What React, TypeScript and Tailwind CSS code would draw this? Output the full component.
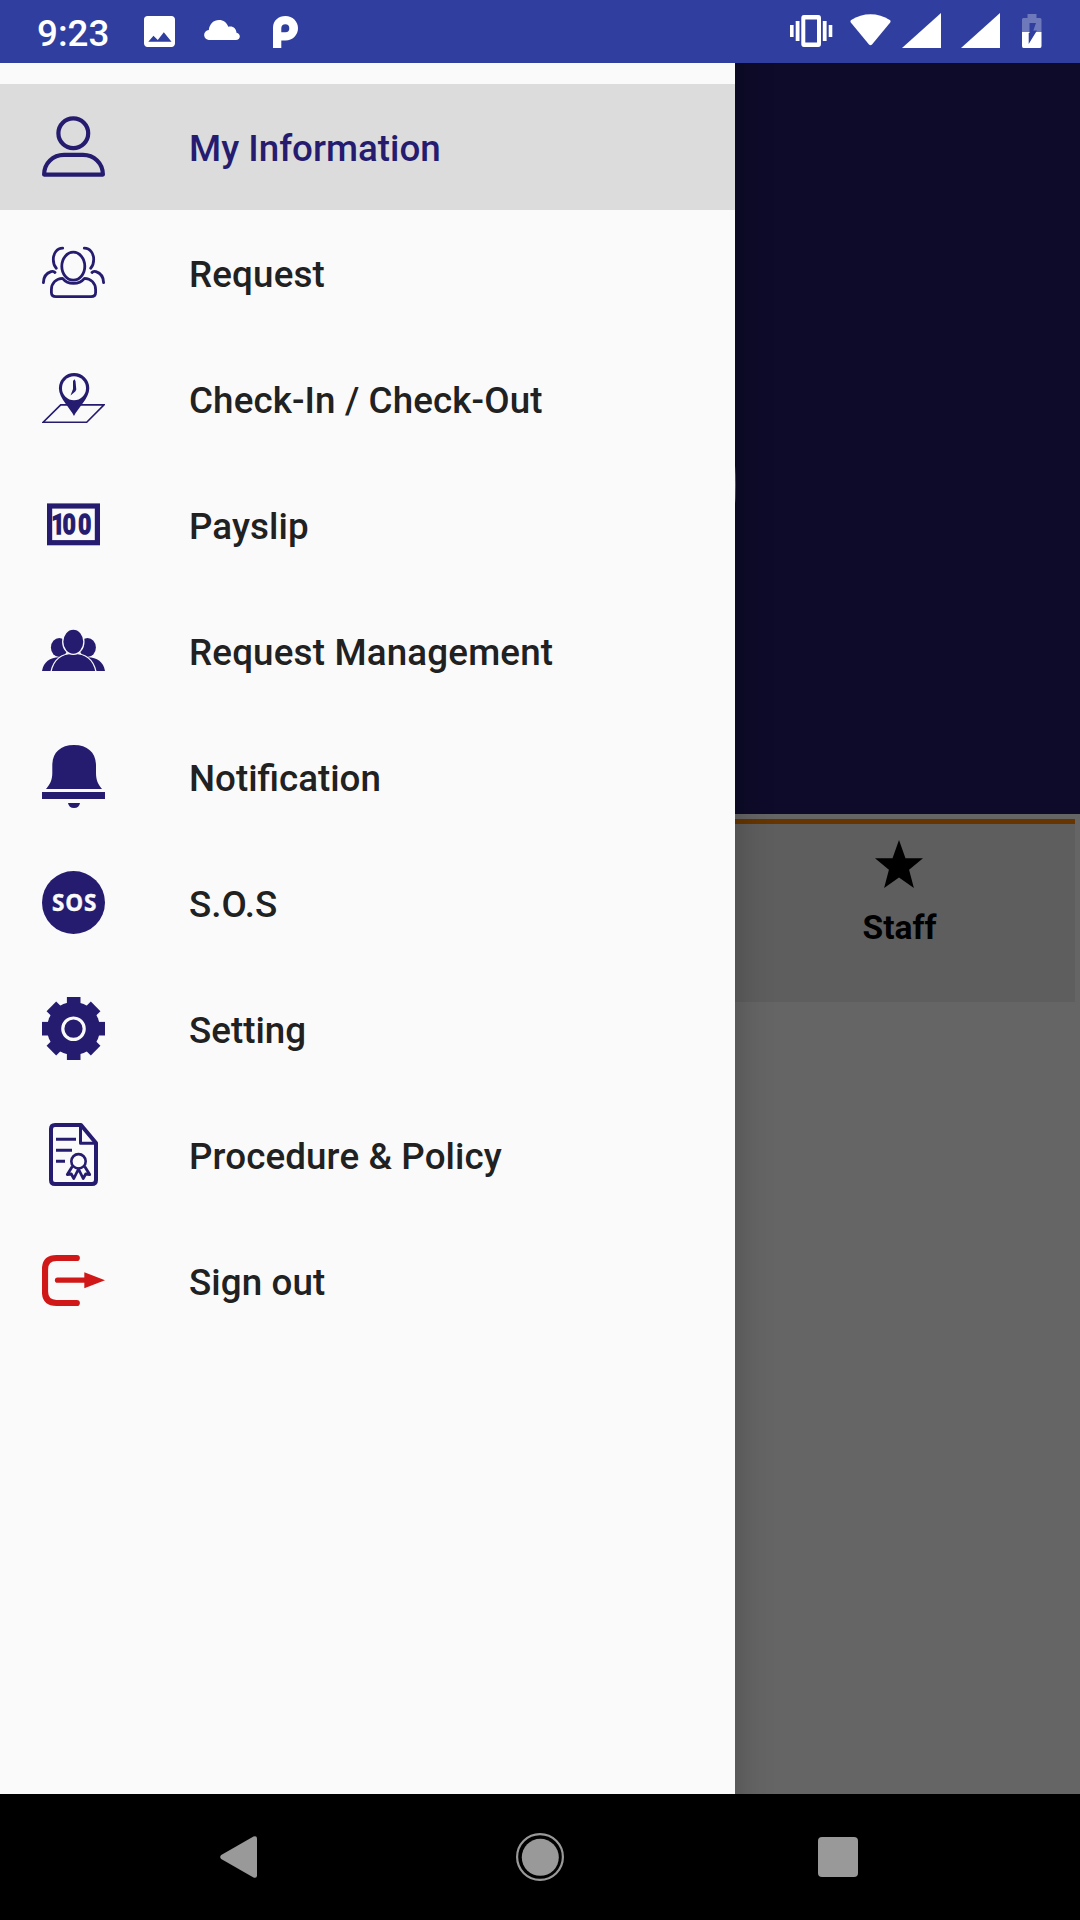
import type { ReactNode } from "react";

const NAVY = "#251c70";

function Icon({ children }: { children: ReactNode }) {
  return (
    <svg className="mt-[31px] block h-[63px] w-[63px] shrink-0" viewBox="0 0 63 63" fill="none">
      {children}
    </svg>
  );
}

const UserIcon = () => (
  <Icon>
    <g stroke={NAVY} strokeWidth="4.200" strokeLinejoin="round">
      <circle cx="31.300" cy="18.300" r="14.900" />
      <path d="M2.100 59.600C2.100 48 11 39.900 22 39.900H41C52 39.900 60.900 48 60.900 59.600Z" />
    </g>
  </Icon>
);

const GroupIcon = () => (
  <Icon>
    <g stroke={NAVY} strokeWidth="2.800" strokeLinecap="round" strokeLinejoin="round">
      <ellipse cx="31.300" cy="25.200" rx="11.500" ry="14" />
      <path d="M20.500 37.300C14 37.300 9.400 42.500 9.400 48.500V51.500Q9.400 55.700 14 55.700H49Q53.600 55.700 53.600 51.500V48.500C53.600 42.500 49 37.300 42.500 37.300C37 44 26 44 20.500 37.300Z" />
      <path d="M20.700 7.200C14.500 7.200 11.300 13 11.300 18.500C11.300 22 12.200 25 14.300 27.300" />
      <path d="M42.300 7.200C48.500 7.200 51.700 13 51.700 18.500C51.700 22 50.800 25 48.700 27.300" />
      <path d="M13 31.500C12 30.300 10.500 30.200 9 30.700C4.500 32.200 1.500 36.500 1.400 41.600" />
      <path d="M50 31.500C51 30.300 52.500 30.200 54 30.700C58.500 32.200 61.500 36.500 61.600 41.600" />
    </g>
  </Icon>
);

const CheckInIcon = () => (
  <Icon>
    <path d="M18.700 37.900H62L44.700 55.300H1.200Z" stroke={NAVY} strokeWidth="1.600" />
    <path
      d="M32 49C28.500 41.500 16.900 31 16.900 21.200A15.200 15.200 0 0 1 47.300 21.200C47.300 31 35.500 41.500 32 49Z"
      fill={NAVY}
    />
    <circle cx="32" cy="21.300" r="12" fill="#fafafa" />
    <path d="M32.500 12.300L31 14V22L28.500 28.500L33.300 24.500L34.300 22.500L33.500 14Z" fill={NAVY} />
  </Icon>
);

const PayslipIcon = () => (
  <Icon>
    <rect x="7.600" y="13" width="47.800" height="36.700" stroke={NAVY} strokeWidth="5.200" />
    <text
      x="11.500 25.200 44.300"
      y="41"
      transform="scale(0.820 1)"
      fill={NAVY}
      stroke={NAVY}
      strokeWidth="1.500"
      className="font-['Roboto',sans-serif] text-[27.500px] font-bold"
    >
      100
    </text>
  </Icon>
);

const ManagementIcon = () => (
  <Icon>
    <g fill={NAVY}>
      <ellipse cx="17.300" cy="28.500" rx="8.400" ry="9.600" />
      <ellipse cx="45.500" cy="28.500" rx="8.400" ry="9.600" />
      <path d="M0 52C1.500 43 8 38.300 17 38.300H46C55 38.300 61.500 43 63 52Z" />
    </g>
    <g fill={NAVY} stroke="#fafafa" strokeWidth="1.300">
      <path d="M9 52.700C11.500 40 20.500 34.300 31.500 34.300S51.500 40 54 52.700Z" />
      <ellipse cx="31.300" cy="22.700" rx="10.600" ry="12.700" />
    </g>
    <rect x="0" y="52" width="63" height="2" fill="#fafafa" />
  </Icon>
);

const BellIcon = () => (
  <Icon>
    <g fill={NAVY}>
      <path d="M4 44C8 39.500 10.300 35 10.300 28V20.500C10.300 8 18 0 32 0S54 8 54 20.500V28C54 35 56 39.500 60 44Z" />
      <rect x="0" y="47" width="63" height="7" />
      <path d="M26 58H38C37.500 61 35.500 63 32 63S26.500 61 26 58Z" />
    </g>
  </Icon>
);

const SosIcon = () => (
  <Icon>
    <circle cx="31.500" cy="31.500" r="31.500" fill={NAVY} />
    <text
      x="9.900"
      y="40"
      fill="#fafafa"
      stroke="#fafafa"
      strokeWidth="0.400"
      textLength="44.600"
      lengthAdjust="spacing"
      className="font-['Open_Sans',sans-serif] text-[22.500px] font-bold"
    >
      SOS
    </text>
  </Icon>
);

const GearIcon = () => (
  <Icon>
    <g fill={NAVY}>
      <circle cx="31.500" cy="31.500" r="26.500" />
      <rect x="24.900" y="0" width="13.600" height="63" />
      <rect x="0" y="24.900" width="63" height="13.600" />
      <rect x="24.700" y="0.200" width="13.600" height="62.600" transform="rotate(45 31.500 31.500)" />
      <rect x="24.700" y="0.200" width="13.600" height="62.600" transform="rotate(-45 31.500 31.500)" />
    </g>
    <circle cx="31.500" cy="31.700" r="10.700" stroke="#fafafa" strokeWidth="3.200" />
  </Icon>
);

const PolicyIcon = () => (
  <Icon>
    <g stroke={NAVY} strokeLinejoin="round">
      <path d="M39 2H13Q9 2 9 6V57Q9 61 13 61H50Q54 61 54 57V20Z" strokeWidth="4" />
      <path d="M38.500 2V20.300H54" strokeWidth="3" />
      <path d="M14 16.300H34M14 27.300H30M14 38.300H23" strokeWidth="3" />
      <circle cx="36.500" cy="38.300" r="7.200" strokeWidth="2.600" />
      <path
        d="M30.300 43.500L25.300 51.500L29.300 51L31.800 55.500L36.500 46L41.200 55.500L43.700 51L47.700 51.500L42.700 43.500"
        strokeWidth="2.800"
      />
    </g>
  </Icon>
);

const SignOutIcon = () => (
  <Icon>
    <g stroke="#d01818" strokeLinecap="round">
      <path d="M34.800 9H14.500Q3 9 3 20.500V42.500Q3 54 14.500 54H34.800" strokeWidth="6.200" />
      <path d="M15.500 31.200H44" strokeWidth="5.200" />
    </g>
    <path d="M42.300 23.300L63 31.300L42.300 39.200Z" fill="#d01818" />
  </Icon>
);

const items = [
  { label: "My Information", icon: <UserIcon />, tracking: "", selected: true },
  { label: "Request", icon: <GroupIcon />, tracking: "tracking-[0.150px]" },
  { label: "Check-In / Check-Out", icon: <CheckInIcon />, tracking: "tracking-[0.110px]" },
  { label: "Payslip", icon: <PayslipIcon />, tracking: "tracking-[0.100px]" },
  { label: "Request Management", icon: <ManagementIcon />, tracking: "tracking-[0.170px]" },
  { label: "Notification", icon: <BellIcon />, tracking: "" },
  { label: "S.O.S", icon: <SosIcon />, tracking: "" },
  { label: "Setting", icon: <GearIcon />, tracking: "" },
  { label: "Procedure & Policy", icon: <PolicyIcon />, tracking: "tracking-[0.110px]" },
  { label: "Sign out", icon: <SignOutIcon />, tracking: "tracking-[0.100px]" },
];

function StatusBar() {
  return (
    <header className="flex h-[63px] shrink-0 items-start justify-between bg-[#303f9f] pl-[37px] pr-[38px] text-white">
      <div className="flex">
        <span className="w-[107px] pt-[12px] text-[36.750px] leading-[43px] font-medium">9:23</span>
        <svg className="mt-[16px] h-[31px] w-[31px]" viewBox="3 3 18 18" fill="currentColor">
          <path d="M21 19V5c0-1.100-.9-2-2-2H5c-1.100 0-2 .9-2 2v14c0 1.100.9 2 2 2h14c1.100 0 2-.9 2-2zM8.500 14.500l2.500 2.500L14.500 12.500l4.500 5.500H5.500l3-3.500z" />
        </svg>
        <svg className="mt-[20px] ml-[29px] h-[20px] w-[36px]" viewBox="0 0 36 20" fill="currentColor">
          <path d="M5.500 20A5 5 0 0 1 4.800 10C5.500 4 9.500 0 15 0C19.500 0 22.800 2.500 24.300 6.700C29 5.500 32.200 8.500 32.500 12.800C37.500 14 36.500 20 31.800 20Z" />
        </svg>
        <svg className="mt-[16px] ml-[33px] h-[32px] w-[25px]" viewBox="0 0 25 32" fill="currentColor">
          <path
            fillRule="evenodd"
            d="M0 32V11.500C0 4.500 5.500 0 12.500 0S25 5.500 25 12.300S19.500 24.500 12.500 24.500H8.300V32ZM8.300 16.200H12.500A4 4 0 1 0 8.300 12Z"
          />
        </svg>
      </div>
      <div className="flex">
        <svg className="mt-[15px] h-[32px] w-[43px]" viewBox="0 0 43 32" fill="currentColor">
          <rect x="0" y="10" width="3.600" height="12" />
          <rect x="5.700" y="6" width="3.800" height="20" />
          <path
            fillRule="evenodd"
            d="M14 0H28.300Q31 0 31 3V29Q31 32 28.300 32H14Q11.300 32 11.300 29V3Q11.300 0 14 0ZM15.300 4.500V27.500H27V4.500Z"
          />
          <rect x="32.800" y="6" width="3.800" height="20" />
          <rect x="38.700" y="10" width="3.600" height="12" />
        </svg>
        <svg className="mt-[14px] ml-[17px] h-[32px] w-[41px]" viewBox="0 0 41 32" fill="currentColor">
          <path d="M0.800 8.500C0.200 7.500 0.400 6.600 1.200 6C13 -1.700 28 -1.700 39.800 6C40.600 6.600 40.800 7.500 40.200 8.500L22 30.500Q20.500 32 19 30.500Z" />
        </svg>
        <svg className="mt-[13px] ml-[11px] h-[35px] w-[39px]" viewBox="0 0 39 35" fill="currentColor">
          <path d="M0 35L39 0V35Z" />
        </svg>
        <svg className="mt-[13px] ml-[20px] h-[35px] w-[39px]" viewBox="0 0 39 35" fill="currentColor">
          <path d="M0 35L39 0V35Z" />
        </svg>
        <svg className="mt-[14px] ml-[22px] h-[34px] w-[20px]" viewBox="0 0 20 34">
          <path d="M5.500 0H14.500V4H18Q19.500 4 19.500 5.500V18H0V5.500Q0 4 1.500 4H5.500Z" fill="#fff" fillOpacity="0.300" />
          <path d="M0 18H19.500V32Q19.500 34 18 34H1.500Q0 34 0 32Z" fill="#fff" />
          <path d="M7.500 9H14L11.300 16.500H15L6.700 30V19H7.500Z" fill="#303f9f" />
        </svg>
      </div>
    </header>
  );
}

function Dashboard() {
  return (
    <div className="flex h-full flex-col bg-[#656565]">
      <div className="flex h-[751px] shrink-0 items-start justify-center overflow-hidden bg-[#0d0b29] pt-[226px]">
        <div className="h-[392px] w-[392px] rounded-full bg-[#646464]" />
      </div>
      <div className="flex pt-[5px] pr-[5px] pl-[724px]">
        <div className="flex h-[183px] flex-1 flex-col items-center border-t-[5px] border-[#663500] bg-[#5e5e5e] pt-[16px] text-black">
          <svg className="mr-px h-[48px] w-[48px]" viewBox="2 2 20 19" preserveAspectRatio="none" fill="currentColor">
            <path d="M12 2L14.700 9.200H22L16.200 13.800L18.200 21L12 16.800L5.800 21L7.800 13.800L2 9.200H9.300Z" />
          </svg>
          <span className="mt-[20px] text-[33.500px] leading-[40px] font-bold">Staff</span>
        </div>
      </div>
    </div>
  );
}

function Drawer() {
  return (
    <nav className="absolute -inset-y-10 left-0 w-[735px] bg-[#fafafa] pt-[61px] shadow-[0_0_36px_rgba(0,0,0,0.240)]">
      <ul>
        {items.map((item) => (
          <li
            key={item.label}
            className={
              item.selected
                ? "flex h-[126px] items-start bg-[#dcdcdc] pl-[42px] text-[#251c70]"
                : "flex h-[126px] items-start pl-[42px] text-[#212121]"
            }
          >
            {item.icon}
            <span className="ml-[84px] pt-[43px] text-[36.750px] leading-[43px] font-medium whitespace-nowrap">
              <span className={item.tracking}>{item.label}</span>
            </span>
          </li>
        ))}
      </ul>
    </nav>
  );
}

function NavigationBar() {
  return (
    <footer className="flex h-[126px] shrink-0 items-center bg-black pl-[220px] text-[#999999]">
      <svg className="h-[42px] w-[37px]" viewBox="0 0 37 42" fill="currentColor">
        <path d="M1.200 19L33.500 0.500Q37 -0.500 37 2.500V39.500Q37 42.500 33.500 41.500L1.200 23Q-0.800 21 1.200 19Z" />
      </svg>
      <svg className="ml-[259px] h-[48px] w-[48px]" viewBox="0 0 48 48" fill="none">
        <circle cx="24" cy="24" r="22.900" stroke="currentColor" strokeWidth="2.200" />
        <circle cx="24.300" cy="24.300" r="18.500" fill="currentColor" />
      </svg>
      <div className="ml-[254px] h-[40px] w-[40px] rounded-[4px] bg-[#999999]" />
    </footer>
  );
}

export default function App() {
  return (
    <div className="flex h-[1920px] w-[1080px] flex-col overflow-hidden font-['Roboto',sans-serif]">
      <StatusBar />
      <main className="relative min-h-0 flex-1 overflow-hidden">
        <Dashboard />
        <Drawer />
      </main>
      <NavigationBar />
    </div>
  );
}
